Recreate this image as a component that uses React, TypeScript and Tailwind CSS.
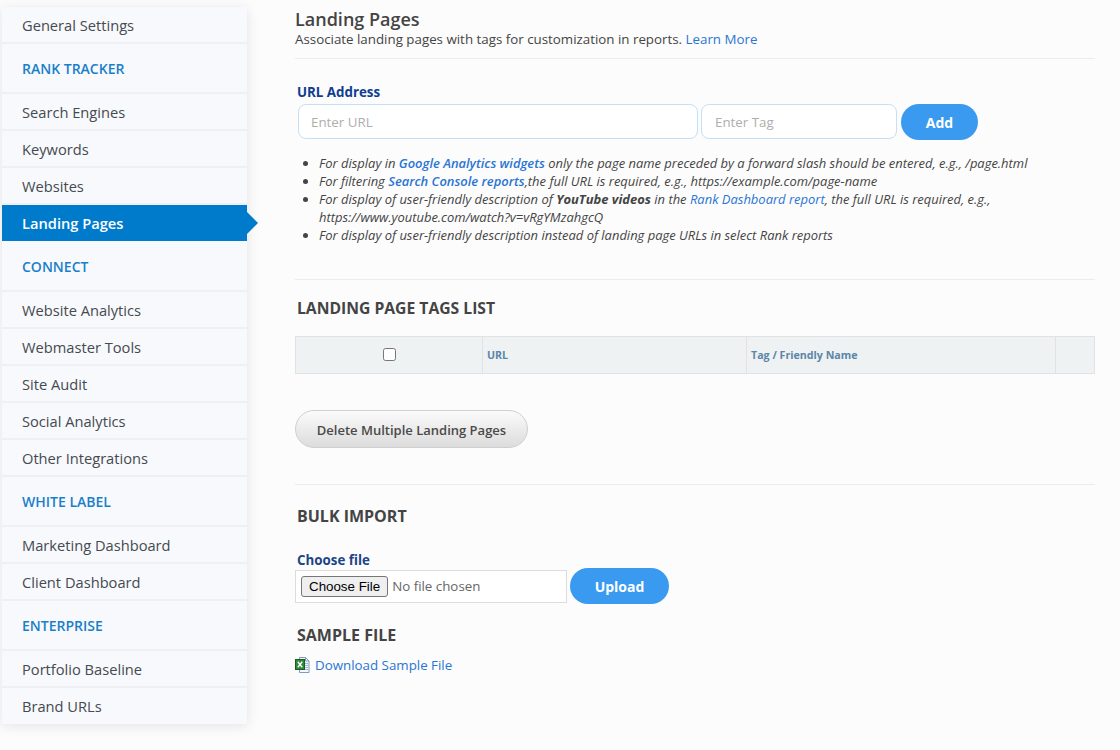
const sideNav: { label: string; kind: "item" | "head" | "active"; h: string }[] = [
  { label: "General Settings", kind: "item", h: "h-[37px]" },
  { label: "RANK TRACKER", kind: "head", h: "h-[50px]" },
  { label: "Search Engines", kind: "item", h: "h-[37px]" },
  { label: "Keywords", kind: "item", h: "h-[37px]" },
  { label: "Websites", kind: "item", h: "h-[37px]" },
  { label: "Landing Pages", kind: "active", h: "h-[36px]" },
  { label: "CONNECT", kind: "head", h: "h-[51px]" },
  { label: "Website Analytics", kind: "item", h: "h-[37px]" },
  { label: "Webmaster Tools", kind: "item", h: "h-[37px]" },
  { label: "Site Audit", kind: "item", h: "h-[37px]" },
  { label: "Social Analytics", kind: "item", h: "h-[37px]" },
  { label: "Other Integrations", kind: "item", h: "h-[37px]" },
  { label: "WHITE LABEL", kind: "head", h: "h-[50px]" },
  { label: "Marketing Dashboard", kind: "item", h: "h-[37px]" },
  { label: "Client Dashboard", kind: "item", h: "h-[37px]" },
  { label: "ENTERPRISE", kind: "head", h: "h-[50px]" },
  { label: "Portfolio Baseline", kind: "item", h: "h-[37px]" },
  { label: "Brand URLs", kind: "item", h: "h-[36px]" },
];

function ExcelIcon() {
  return (
    <svg width="15" height="16" viewBox="0 0 15 16" className="shrink-0">
      <path d="M4.500 0.500h6l3.500 3.500v11.500h-9.500z" fill="#f4f8fc" stroke="#7f9db9" />
      <path d="M10.500 0.500v3.500h3.500" fill="none" stroke="#7f9db9" />
      <path d="M10 6.500h3M10 8.500h3M10 10.500h3M10 12.500h3" stroke="#9dbbd8" />
      <rect x="0.500" y="2.500" width="9" height="10" fill="#2f8a3a" stroke="#1c5a26" />
      <path d="M2.800 4.800l4.400 5.400M7.200 4.800l-4.400 5.400" stroke="#fff" strokeWidth="1.400" />
    </svg>
  );
}

function Sidebar() {
  return (
    <nav className="mt-[7px] ml-[2px] w-[245px] shrink-0 self-start bg-[#f8f9fc] shadow-[0_2px_12px_rgba(0,0,0,0.1)]">
      {sideNav.map((item) => {
        if (item.kind === "active") {
          return (
            <div
              key={item.label}
              className={`relative flex items-center pl-[20px] bg-[#007bcc] text-white font-semibold text-[14.670px] ${item.h}`}
            >
              {item.label}
              <span className="absolute left-full top-[7px] h-[22px] w-[11px] bg-[#007bcc] [clip-path:polygon(0_0,100%_50%,0_100%)]" />
            </div>
          );
        }
        if (item.kind === "head") {
          return (
            <div
              key={item.label}
              className={`flex items-center pl-[20px] pt-[1px] border-b-2 border-[#eff0f4] text-[#1a7fc9] font-semibold text-[14px] ${item.h}`}
            >
              {item.label}
            </div>
          );
        }
        return (
          <div
            key={item.label}
            className={`flex items-center pl-[20px] pt-[1px] text-[#444a50] text-[14.670px] border-b-2 border-[#eff0f4] last:border-b-0 last:pt-0 last:pb-[1px] ${item.h}`}
          >
            {item.label}
          </div>
        );
      })}
    </nav>
  );
}

function Notes() {
  return (
    <ul className="mt-[14px] ml-[24px] list-disc pl-0 text-[12.960px] leading-[18px] italic text-[#444]">
      <li>
        For display in <b className="font-semibold text-[#2a75d3]">Google Analytics widgets</b> only the page name
        preceded by a forward slash should be entered, e.g., /page.html
      </li>
      <li>
        For filtering <b className="font-semibold text-[#2a75d3]">Search Console reports</b>,the full URL is required,
        e.g., https://example.com/page-name
      </li>
      <li>
        For display of user-friendly description of <b className="font-bold">YouTube videos</b> in the{" "}
        <span className="text-[#2a75d3]">Rank Dashboard report</span>, the full URL is required, e.g.,
        <br />
        https://www.youtube.com/watch?v=vRgYMzahgcQ
      </li>
      <li>For display of user-friendly description instead of landing page URLs in select Rank reports</li>
    </ul>
  );
}

export default function App() {
  return (
    <div className="flex h-[750px] w-[1120px] overflow-hidden bg-[#fcfcfc] font-['Open_Sans',sans-serif]">
      <Sidebar />
      <main className="ml-[48px] w-[800px] shrink-0 text-[#444]">
        <h1 className="mt-[7px] text-[18px] leading-[24px] font-semibold text-[#444]">Landing Pages</h1>
        <p className="text-[13.330px] leading-[16px] text-[#444]">
          Associate landing pages with tags for customization in reports.{" "}
          <span className="text-[#2a75d3]">Learn More</span>
        </p>
        <hr className="mt-[11px] border-[#ececec]" />

        <label className="mt-[24px] ml-[2px] block text-[13.330px] leading-[18px] font-bold text-[#0f3d91]">
          URL Address
        </label>
        <div className="mt-[3px] flex items-start ml-[3px]">
          <input
            placeholder="Enter URL"
            className="h-[35px] w-[400px] rounded-[8px] border border-[#c3e0f7] bg-white px-[12px] pt-[1px] text-[13.330px] outline-none placeholder:text-[#aeaeae]"
          />
          <input
            placeholder="Enter Tag"
            className="ml-[3px] h-[35px] w-[196px] rounded-[8px] border border-[#c3e0f7] bg-white px-[13px] pt-[1px] text-[13.330px] outline-none placeholder:text-[#aeaeae]"
          />
          <button className="ml-[4px] h-[36px] w-[77px] rounded-full bg-[#3a9af0] text-[14px] font-bold text-white">
            Add
          </button>
        </div>

        <Notes />

        <hr className="mt-[35px] border-[#ececec]" />
        <h2 className="mt-[18px] ml-[2px] text-[15.700px] leading-[21px] font-bold text-[#444]">LANDING PAGE TAGS LIST</h2>

        <div className="mt-[17px] grid h-[38px] grid-cols-[186px_264px_309px_39px] border border-[#e0e2e3] bg-[#eff2f3] text-[10.670px] font-bold text-[#5b86a8]">
          <div className="flex items-center justify-center">
            <input type="checkbox" className="mb-[1px] h-[13px] w-[13px]" />
          </div>
          <div className="flex items-center border-l border-[#e0e2e3] pl-[4px]">URL</div>
          <div className="flex items-center border-l border-[#e0e2e3] pl-[4px]">Tag / Friendly Name</div>
          <div className="border-l border-[#e0e2e3]" />
        </div>

        <button className="mt-[36px] block h-[38px] w-[233px] rounded-full border border-[#cfcfcf] bg-gradient-to-b from-[#fbfbfb] to-[#dcdcdc] pt-[3px] text-[13px] font-semibold text-[#4a4a4a]">
          Delete Multiple Landing Pages
        </button>

        <hr className="mt-[36px] border-[#ececec]" />
        <h2 className="mt-[21px] ml-[2px] text-[16px] leading-[20px] font-bold text-[#444]">BULK IMPORT</h2>

        <label className="mt-[26px] ml-[2px] block text-[13.330px] leading-[16px] font-bold text-[#1c4587]">
          Choose file
        </label>
        <div className="flex items-center">
          <input
            type="file"
            className="h-[33px] w-[272px] border border-[#dcdcdc] bg-white pt-[5px] pl-[5px] text-[13.330px] text-[#666] file:mr-[4px] file:h-[21px] file:rounded-[3px] file:border file:border-[#767676] file:bg-[#efefef] file:px-[7px] file:font-['Liberation_Sans',sans-serif] file:text-[13.333px] file:text-black"
          />
          <button className="ml-[3px] h-[36px] w-[99px] rounded-full bg-[#3a9af0] text-[14px] font-bold text-white">
            Upload
          </button>
        </div>

        <h2 className="mt-[21px] ml-[2px] text-[16px] leading-[20px] font-bold text-[#444]">SAMPLE FILE</h2>
        <div className="mt-[10px] flex items-center gap-[5px] text-[13.330px] leading-[20px] text-[#2a75d3]">
          <ExcelIcon />
          Download Sample File
        </div>
      </main>
    </div>
  );
}
